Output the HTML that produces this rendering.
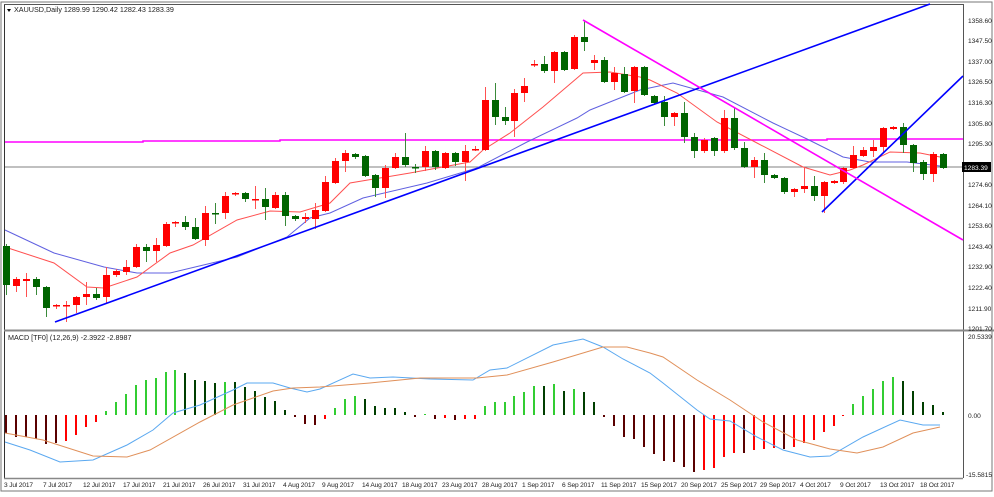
<!DOCTYPE html>
<html><head><meta charset="utf-8"><style>
html,body{margin:0;padding:0;background:#fff;width:994px;height:497px;overflow:hidden}
svg{display:block}
text{font-family:"Liberation Sans",sans-serif;font-size:7.2px;fill:#222}
#pax text{font-size:6.6px}
#dax text{font-size:6.6px;letter-spacing:-0.15px}
</style></head><body>
<svg id="s" width="994" height="497" viewBox="0 0 994 497" xmlns="http://www.w3.org/2000/svg">
<rect x="0" y="0" width="994" height="497" fill="#fff"/>
<rect x="1" y="2" width="991" height="489" fill="none" stroke="#777" stroke-width="1"/>
<line x1="4.5" y1="4" x2="4.5" y2="478" stroke="#333" stroke-width="1"/>
<line x1="4" y1="4.5" x2="963" y2="4.5" stroke="#555" stroke-width="1"/>
<line x1="963.5" y1="4" x2="963.5" y2="478" stroke="#555" stroke-width="1"/>
<line x1="4" y1="330.5" x2="994" y2="330.5" stroke="#888" stroke-width="2"/>
<line x1="4" y1="478.5" x2="963" y2="478.5" stroke="#888" stroke-width="1.5"/>
<polyline points="5,142 143,142 143,141 280,141 280,140 827,140 827,139 963,139" fill="none" stroke="#ff00ff" stroke-width="1.5"/>
<line x1="5" y1="167" x2="963" y2="167" stroke="#808080" stroke-width="1"/>
<g id="ma"></g>
<g id="candles"></g>
<g id="trend">
<line x1="55" y1="322" x2="930" y2="4" stroke="#0000ff" stroke-width="1.6"/>
<line x1="822" y1="212" x2="963" y2="76" stroke="#0000ff" stroke-width="1.6"/>
<line x1="583" y1="20" x2="963" y2="240" stroke="#ff00ff" stroke-width="1.6"/>
</g>
<g id="hist"></g>
<polyline fill="none" stroke="#5aa8f0" stroke-width="1" points="5,442 30,450 60,462 93,460 127,445 153,430 173,413 200,405 233,390 247,383 273,383 290,388 307,392 320,389 353,374 370,378 393,377 430,379 473,380 490,370 507,368 553,345 583,339 603,347 623,359 650,373 663,383 697,410 710,419 730,421 757,437 783,450 810,457 830,456 863,437 900,420 923,425 940,425"/>
<polyline fill="none" stroke="#e0905a" stroke-width="1" points="5,433 43,440 93,456 127,457 150,450 200,422 233,405 273,391 293,388 320,387 370,383 420,378 477,378 507,375 553,362 603,347 627,347 650,353 663,357 697,380 730,400 763,422 797,440 830,449 857,453 883,447 913,433 940,427"/>
<polygon points="7,9 11,9 9,12" fill="#000"/>
<text x="14" y="12">XAUUSD,Daily  1289.99 1290.42 1282.43 1283.39</text>
<text x="8" y="340">MACD [TF0] (12,26,9) -2.3922 -2.8987</text>
<g id="pax">
<text x="968" y="23">1358.60</text>
<text x="968" y="43">1347.50</text>
<text x="968" y="64">1337.00</text>
<text x="968" y="84">1326.50</text>
<text x="968" y="105">1316.30</text>
<text x="968" y="126">1305.80</text>
<text x="968" y="146">1295.30</text>
<text x="968" y="187">1274.60</text>
<text x="968" y="208">1264.10</text>
<text x="968" y="228">1253.60</text>
<text x="968" y="249">1243.40</text>
<text x="968" y="269">1232.90</text>
<text x="968" y="290">1222.40</text>
<text x="968" y="311">1211.90</text>
<text x="968" y="331">1201.70</text>
<text x="968" y="339">20.5339</text>
<text x="968" y="418">0.00</text>
<text x="966" y="477">-15.5815</text>
</g>
<rect x="962" y="162" width="29" height="10" fill="#000"/>
<text x="964" y="170" style="fill:#fff;font-size:6.6px">1283.39</text>
<g id="dax">
<text x="4" y="487">3 Jul 2017</text>
<text x="43" y="487">7 Jul 2017</text>
<text x="83" y="487">12 Jul 2017</text>
<text x="123" y="487">17 Jul 2017</text>
<text x="163" y="487">21 Jul 2017</text>
<text x="203" y="487">26 Jul 2017</text>
<text x="243" y="487">31 Jul 2017</text>
<text x="283" y="487">4 Aug 2017</text>
<text x="322" y="487">9 Aug 2017</text>
<text x="362" y="487">14 Aug 2017</text>
<text x="402" y="487">18 Aug 2017</text>
<text x="442" y="487">23 Aug 2017</text>
<text x="482" y="487">28 Aug 2017</text>
<text x="522" y="487">1 Sep 2017</text>
<text x="562" y="487">6 Sep 2017</text>
<text x="601" y="487">11 Sep 2017</text>
<text x="641" y="487">15 Sep 2017</text>
<text x="681" y="487">20 Sep 2017</text>
<text x="721" y="487">25 Sep 2017</text>
<text x="760" y="487">29 Sep 2017</text>
<text x="800" y="487">4 Oct 2017</text>
<text x="840" y="487">9 Oct 2017</text>
<text x="880" y="487">13 Oct 2017</text>
<text x="920" y="487">18 Oct 2017</text>
</g>
</svg>
<script>
var NS="http://www.w3.org/2000/svg";
function el(p,t,a){var e=document.createElementNS(NS,t);for(var k in a)e.setAttribute(k,a[k]);p.appendChild(e);return e;}
var C=[[246,285,244,295,'g'],[279,286,277,292,'r'],[279,281,273,297,'r'],[279,287,277,295,'g'],[287,308,286,317,'g'],[305,306,304,309,'r'],[305,306,301,322,'r'],[297,305,296,313,'r'],[294,297,282,305,'r'],[294,298,288,300,'g'],[275,297,267,303,'r'],[271,275,269,277,'r'],[267,272,260,275,'r'],[247,267,244,268,'r'],[247,251,244,262,'g'],[245,251,238,262,'r'],[224,246,222,247,'r'],[222,223,221,227,'r'],[222,227,216,230,'g'],[227,239,218,240,'g'],[213,240,206,246,'r'],[213,214,203,224,'g'],[196,213,192,219,'r'],[193,194,192,196,'r'],[193,199,192,202,'g'],[199,200,186,209,'r'],[199,207,188,220,'g'],[195,208,192,209,'r'],[195,216,192,226,'g'],[216,219,215,221,'g'],[217,219,213,223,'r'],[210,219,203,229,'r'],[182,211,176,212,'r'],[161,183,158,184,'r'],[153,161,150,172,'r'],[154,157,153,159,'g'],[156,176,155,177,'g'],[175,188,174,197,'g'],[168,188,165,198,'r'],[157,168,153,169,'r'],[157,165,133,167,'g'],[167,168,164,173,'g'],[151,167,146,171,'r'],[151,167,150,170,'g'],[153,168,152,169,'r'],[153,162,152,166,'g'],[151,162,145,181,'r'],[149,150,146,151,'r'],[100,150,87,151,'r'],[100,117,83,125,'g'],[117,121,107,125,'g'],[93,121,89,137,'r'],[86,93,78,102,'r'],[64,65,60,67,'r'],[64,71,56,73,'g'],[52,71,51,83,'r'],[52,70,51,71,'g'],[37,69,35,70,'r'],[37,42,20,51,'g'],[60,63,55,70,'r'],[60,82,57,83,'g'],[73,82,67,90,'r'],[74,92,67,93,'g'],[67,91,66,103,'r'],[67,95,66,96,'g'],[96,103,95,104,'g'],[102,117,96,126,'g'],[113,117,112,126,'r'],[113,137,102,143,'g'],[137,151,133,158,'g'],[140,151,138,153,'r'],[138,151,137,156,'g'],[118,151,110,153,'r'],[118,148,108,150,'g'],[148,167,142,168,'g'],[160,167,157,178,'r'],[160,175,153,183,'g'],[175,178,174,179,'g'],[178,192,177,194,'g'],[189,192,188,197,'r'],[186,189,168,193,'r'],[186,196,176,201,'g'],[182,196,181,213,'r'],[181,183,180,184,'r'],[168,182,167,184,'r'],[155,168,146,169,'r'],[150,156,147,157,'r'],[147,151,140,157,'r'],[128,147,127,153,'r'],[127,129,126,130,'r'],[127,145,123,153,'g'],[145,163,144,172,'g'],[162,174,160,180,'g'],[154,174,152,182,'r'],[154,168,153,169,'g']];
var H=[[-18,'M'],[-22,'M'],[-22,'M'],[-24,'M'],[-29,'M'],[-28,'M'],[-26,'R'],[-20,'R'],[-12,'R'],[-7,'R'],[4,'L'],[13,'L'],[21,'L'],[30,'L'],[35,'L'],[37,'L'],[43,'L'],[45,'L'],[42,'D'],[35,'D'],[34,'D'],[32,'D'],[33,'L'],[33,'D'],[28,'D'],[24,'D'],[18,'D'],[14,'D'],[5,'D'],[-2,'M'],[-9,'M'],[-10,'M'],[-4,'R'],[7,'L'],[16,'L'],[19,'L'],[16,'D'],[9,'D'],[7,'D'],[7,'D'],[3,'D'],[-2,'M'],[1,'L'],[-4,'M'],[-3,'R'],[-5,'M'],[-4,'R'],[-4,'R'],[9,'L'],[13,'L'],[13,'L'],[19,'L'],[23,'L'],[29,'L'],[29,'D'],[31,'L'],[24,'D'],[26,'L'],[23,'D'],[13,'D'],[-2,'M'],[-11,'M'],[-22,'M'],[-24,'M'],[-32,'M'],[-39,'M'],[-46,'M'],[-47,'M'],[-52,'M'],[-57,'M'],[-55,'R'],[-53,'R'],[-42,'R'],[-38,'R'],[-38,'M'],[-35,'R'],[-34,'R'],[-33,'R'],[-34,'M'],[-32,'R'],[-28,'R'],[-25,'R'],[-17,'R'],[-11,'R'],[-1,'R'],[11,'L'],[19,'L'],[26,'L'],[34,'L'],[38,'L'],[34,'D'],[24,'D'],[13,'D'],[10,'D'],[3,'D']];
var HC={M:'#5a0000',R:'#ff0000',L:'#32cd32',D:'#003f00'};
var cg=document.getElementById('candles'),hg=document.getElementById('hist'),mg=document.getElementById('ma');
function X(i){return 6+i*9.97;}
C.forEach(function(c,i){var x=Math.round(X(i));var col=c[4]=='r'?'#ff0000':'#006400';
el(cg,'line',{x1:x+0.5,y1:c[2],x2:x+0.5,y2:c[3],stroke:c[4]=='r'?'#ff5050':'#3a8a3a','stroke-width':1});
el(cg,'rect',{x:x-3,y:c[0],width:7,height:Math.max(1.5,c[1]-c[0]),fill:col});});
H.forEach(function(h,i){var x=Math.round(X(i));var v=h[0];
el(hg,'rect',{x:x-1,y:v>0?415-v:415,width:2,height:Math.max(1,Math.abs(v)),fill:HC[h[1]]});});
el(mg,'polyline',{fill:'none',stroke:'#6060e0','stroke-width':1,points:"5,230 54,253 104,267 137,273 170,273 237,257 287,237 310,218 330,213 363,198 427,183 477,168 527,142 577,118 590,110 640,90 673,83 723,97 773,123 807,139 843,157 870,162 907,162 940,166"});
el(mg,'polyline',{fill:'none',stroke:'#ff5050','stroke-width':1,points:"5,247 54,263 87,287 104,288 137,277 170,253 193,245 237,220 270,211 300,212 330,203 350,183 410,173 470,162 483,150 510,133 543,107 563,90 583,73 610,72 640,77 650,80 677,93 717,122 757,143 803,167 830,175 850,170 863,165 890,152 920,153 940,157"});
</script>
</body></html>
